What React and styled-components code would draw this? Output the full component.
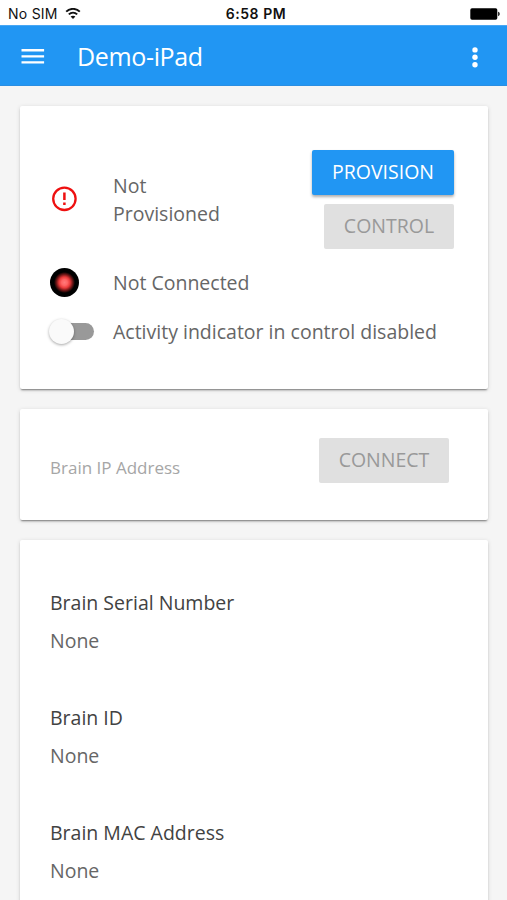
import React from "react";
import styled, { createGlobalStyle } from "styled-components";

const GlobalStyle = createGlobalStyle`
  * { box-sizing: border-box; }
  body { margin: 0; background: #f5f5f5; }
`;

const Screen = styled.div`
  height: 900px;
  overflow: hidden;
  background: #f5f5f5;
  font-family: "Open Sans", "Noto Sans", sans-serif;
  font-size: 19.5px;
  letter-spacing: 0;
  color: #666;
`;

const StatusBar = styled.div`
  display: grid;
  grid-template-columns: 1fr auto 1fr;
  align-items: center;
  height: 25px;
  padding: 3px 7px 0 8px;
  background: #fff;
  color: #111;
  font: 14px/20px Inter, "Liberation Sans", sans-serif;
  letter-spacing: 0;
`;

const Carrier = styled.div`
  display: flex;
  align-items: center;
  gap: 7px;
  letter-spacing: 0.25px;
`;

const Clock = styled.div`
  font-weight: 600;
  letter-spacing: 0.55px;
  padding-left: 4px;
`;

const BatterySlot = styled.div`
  display: flex;
  justify-content: flex-end;
`;

const AppBar = styled.header`
  display: flex;
  align-items: center;
  height: 61px;
  padding: 2px 22px 0 21px;
  background: #2196f3;
  border-top: 1px solid #48a7f4;
  border-bottom: 1px solid #2a8ee2;
  color: #fff;
`;

const Title = styled.h1`
  flex: 1;
  margin: 0 0 2px 32px;
  font-size: 25px;
  font-weight: 400;
  line-height: 32px;
  letter-spacing: -0.35px;
`;

const IconButton = styled.button`
  display: flex;
  padding: 0;
  border: 0;
  background: none;
  color: inherit;
`;

const Cards = styled.main`
  display: flex;
  flex-direction: column;
  gap: 20px;
  padding: 20px 19px 0 20px;
`;

const Card = styled.section`
  height: ${(p) => p.$height}px;
  padding: ${(p) => p.$padding};
  flex: none;
  background: #fff;
  border-radius: 2px;
  box-shadow: 0 2px 2px -1px rgba(0, 0, 0, 0.45), 0 1px 4px rgba(0, 0, 0, 0.15);
`;

const StatusRow = styled.div`
  display: grid;
  grid-template-columns: 63px 1fr auto;
  align-items: center;
  height: ${(p) => p.$height}px;
  line-height: 28px;
`;

const IconSlot = styled.div`
  display: flex;
  width: 29px;
  justify-content: center;
`;

const Label = styled.div`
  width: ${(p) => (p.$narrow ? "120px" : "auto")};
  padding-top: 2px;
  white-space: ${(p) => (p.$narrow ? "normal" : "nowrap")};
`;

const ButtonStack = styled.div`
  display: flex;
  flex-direction: column;
  align-items: flex-end;
  gap: 9px;
`;

const Button = styled.button`
  width: ${(p) => p.$width}px;
  height: 45px;
  padding: 0 0 2px;
  border: 0;
  border-radius: 2px;
  font: inherit;
  line-height: 43px;
  color: ${(p) => (p.disabled ? "#999" : "#fff")};
  background: ${(p) => (p.disabled ? "#e0e0e0" : "#2196f3")};
  box-shadow: ${(p) => (p.disabled ? "none" : "0 2px 3px rgba(0, 0, 0, 0.32)")};
`;

const Led = styled.div`
  width: 29px;
  height: 29px;
  border-radius: 50%;
  background: radial-gradient(circle, #ff7a7a 0, #ff6464 3px, #e83a3a 5.5px, #721717 8px, #000 10.5px);
`;

const Track = styled.div`
  display: flex;
  align-items: center;
  width: 43px;
  height: 17px;
  margin-left: 1px;
  border-radius: 9px;
  background: #999;
`;

const Knob = styled.div`
  flex: none;
  width: 25px;
  height: 25px;
  margin-left: -2px;
  border-radius: 50%;
  background: #fafafa;
  box-shadow: 0 1px 3px rgba(0, 0, 0, 0.35);
`;

const AddressRow = styled.div`
  display: flex;
  justify-content: space-between;
`;

const AddressInput = styled.input`
  width: 220px;
  height: 30px;
  margin-top: 15px;
  padding: 0;
  border: 0;
  outline: 0;
  font: 17px/30px "Open Sans", "Noto Sans", sans-serif;
  letter-spacing: 0;
  &::placeholder { color: #a6a6a6; opacity: 1; }
`;

const Details = styled.dl`
  display: flex;
  flex-direction: column;
  gap: 39px;
  margin: 0;
`;

const Detail = styled.div`
  height: 76px;
  line-height: 38px;
`;

const Term = styled.dt`
  color: #424242;
`;

const Value = styled.dd`
  margin: 0;
`;

const details = [
  ["Brain Serial Number", "None"],
  ["Brain ID", "None"],
  ["Brain MAC Address", "None"],
];

const WifiIcon = () => (
  <svg width="16" height="12" viewBox="0 0 16 12" fill="none" stroke="#111" strokeWidth="1.9">
    <path d="M1.2 3.7C5 -.1 11 -.1 14.8 3.7" />
    <path d="M3.8 6.4c2.4-2.3 6-2.3 8.4 0" />
    <path d="M8 11 5.6 8.6c1.3-1.2 3.5-1.2 4.8 0Z" fill="#111" stroke="none" />
  </svg>
);

const BatteryIcon = () => (
  <svg width="30" height="12" viewBox="0 0 30 12">
    <rect x=".3" y=".3" width="27" height="11.4" rx="1.7" fill="#000" />
    <path d="M28 3.8c2.4.6 2.4 3.8 0 4.4Z" fill="#333" />
  </svg>
);

const MenuIcon = () => (
  <svg width="24" height="18" viewBox="0 0 24 18" fill="currentColor">
    <path d="M.5 1.1h22.6v2.4H.5zM.5 7.2h22.6v2.4H.5zM.5 13.2h22.6v2.4H.5z" />
  </svg>
);

const MoreIcon = () => (
  <svg width="20" height="22" viewBox="0 0 20 22" fill="currentColor">
    <circle cx="10" cy="3.9" r="2.7" />
    <circle cx="10" cy="11.3" r="2.7" />
    <circle cx="10" cy="18.7" r="2.7" />
  </svg>
);

const AlertIcon = () => (
  <svg width="27" height="26" viewBox="0 0 27 26" fill="none" stroke="#ee1010">
    <circle cx="13.4" cy="12.8" r="11.2" strokeWidth="2.3" />
    <path d="M13.4 6.6v7.5M13.4 16.4v2.5" strokeWidth="2.5" />
  </svg>
);

export default function App() {
  return (
    <Screen>
      <GlobalStyle />
      <StatusBar>
        <Carrier>No SIM <WifiIcon /></Carrier>
        <Clock>6:58 PM</Clock>
        <BatterySlot><BatteryIcon /></BatterySlot>
      </StatusBar>
      <AppBar>
        <IconButton aria-label="Menu"><MenuIcon /></IconButton>
        <Title>Demo-iPad</Title>
        <IconButton aria-label="More"><MoreIcon /></IconButton>
      </AppBar>
      <Cards>
        <Card $height={283} $padding="43px 34px 0 30px">
          <StatusRow $height={100}>
            <IconSlot><AlertIcon /></IconSlot>
            <Label $narrow>Not Provisioned</Label>
            <ButtonStack>
              <Button $width={142}>PROVISION</Button>
              <Button $width={130} disabled>CONTROL</Button>
            </ButtonStack>
          </StatusRow>
          <StatusRow $height={66}>
            <IconSlot><Led /></IconSlot>
            <Label>Not Connected</Label>
          </StatusRow>
          <StatusRow $height={32}>
            <Track role="switch" aria-checked="false"><Knob /></Track>
            <Label>Activity indicator in control disabled</Label>
          </StatusRow>
        </Card>
        <Card $height={111} $padding="29px 39px 0 30px">
          <AddressRow>
            <AddressInput placeholder="Brain IP Address" />
            <Button $width={130} disabled>CONNECT</Button>
          </AddressRow>
        </Card>
        <Card $height={400} $padding="44px 30px 0">
          <Details>
            {details.map(([term, value]) => (
              <Detail key={term}>
                <Term>{term}</Term>
                <Value>{value}</Value>
              </Detail>
            ))}
          </Details>
        </Card>
      </Cards>
    </Screen>
  );
}
